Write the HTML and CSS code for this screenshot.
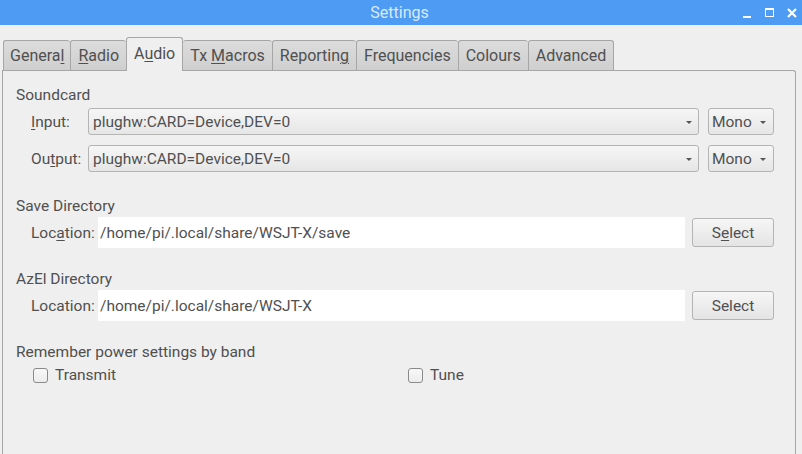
FILE: index.html
```html
<!DOCTYPE html>
<html>
<head>
<meta charset="utf-8">
<title>Settings</title>
<link rel="stylesheet" href="styles.css">
</head>
<body>
<div class="window">
  <div class="titlebar">
    <span class="title">Settings</span>
    <div class="controls">
      <span class="ctl ctl-min"></span>
      <span class="ctl ctl-max"></span>
      <span class="ctl ctl-close">
        <svg width="10" height="10" viewBox="0 0 10 10"><path d="M1 1 L9 9 M9 1 L1 9" stroke="#fff" stroke-width="2.2"/></svg>
      </span>
    </div>
  </div>

  <div class="tabs">
    <div class="tab"><span>Genera<u>l</u></span></div>
    <div class="tab"><span><u>R</u>adio</span></div>
    <div class="tab active"><span>A<u>u</u>dio</span></div>
    <div class="tab"><span>Tx <u>M</u>acros</span></div>
    <div class="tab"><span>Reportin<u>g</u></span></div>
    <div class="tab"><span>Frequencies</span></div>
    <div class="tab"><span>Colours</span></div>
    <div class="tab"><span>Advanced</span></div>
  </div>

  <div class="pane">
    <div class="group group-sound">
      <div class="group-title">Soundcard</div>
      <div class="row row-combo">
        <span class="label label-sound"><u>I</u>nput:</span>
        <div class="combo combo-wide"><span>plughw:CARD=Device,DEV=0</span><span class="arrow"></span></div>
        <div class="combo combo-mono"><span>Mono</span><span class="arrow"></span></div>
      </div>
      <div class="row row-combo row-gap">
        <span class="label label-sound">Ou<u>t</u>put:</span>
        <div class="combo combo-wide"><span>plughw:CARD=Device,DEV=0</span><span class="arrow"></span></div>
        <div class="combo combo-mono"><span>Mono</span><span class="arrow"></span></div>
      </div>
    </div>

    <div class="group group-save">
      <div class="group-title">Save Directory</div>
      <div class="row row-loc">
        <span class="label label-loc">Loc<u>a</u>tion:</span>
        <div class="field">/home/pi/.local/share/WSJT-X/save</div>
        <div class="button"><span>S<u>e</u>lect</span></div>
      </div>
    </div>

    <div class="group group-azel">
      <div class="group-title">AzEl Directory</div>
      <div class="row row-loc">
        <span class="label label-loc">Location:</span>
        <div class="field">/home/pi/.local/share/WSJT-X</div>
        <div class="button"><span>Select</span></div>
      </div>
    </div>

    <div class="group group-power">
      <div class="group-title">Remember power settings by band</div>
      <div class="checks">
        <label class="check"><span class="box"></span><span>Transmit</span></label>
        <label class="check"><span class="box"></span><span>Tune</span></label>
      </div>
    </div>
  </div>
</div>
</body>
</html>
```

FILE: styles.css
```css
* { box-sizing: border-box; }

html, body {
  margin: 0;
  padding: 0;
}

body {
  width: 802px;
  height: 454px;
  overflow: hidden;
  background: #efefef;
  font-family: Roboto, "Noto Sans", "Liberation Sans", sans-serif;
  font-size: 15.5px;
  color: #505050;
}

u {
  text-decoration: underline;
  text-underline-offset: 2px;
  text-decoration-thickness: 1px;
}

.window {
  display: flex;
  flex-direction: column;
  height: 454px;
}

/* Title bar */
.titlebar {
  position: relative;
  height: 25px;
  background: #4d9bf2;
  display: flex;
  align-items: center;
  justify-content: center;
  flex-shrink: 0;
}

.title {
  color: #d9eafd;
  font-size: 16px;
  margin-left: -3px;
}

.controls {
  position: absolute;
  right: 5px;
  top: 0;
  height: 25px;
  display: flex;
  align-items: center;
  gap: 13px;
}

.ctl {
  display: block;
  width: 10px;
  height: 10px;
  position: relative;
}

.ctl-min::after {
  content: "";
  position: absolute;
  left: 1px;
  bottom: 0;
  width: 8px;
  height: 2px;
  background: #fff;
}

.ctl-max {
  border: 1.5px solid #fff;
  border-top-width: 2px;
  width: 9px;
  height: 9px;
}

.ctl-close svg { display: block; }

/* Tabs */
.tabs {
  display: flex;
  align-items: flex-end;
  padding-left: 3px;
  margin-top: 12px;
  height: 33px;
  flex-shrink: 0;
  position: relative;
  z-index: 1;
}

.tab {
  height: 30px;
  padding: 0 7px;
  border: 1px solid #a6a6a6;
  border-bottom: none;
  border-right: none;
  border-radius: 3px 3px 0 0;
  background: linear-gradient(#dcdcdc, #cfcfcf);
  display: flex;
  align-items: center;
  color: #505050;
  font-size: 16px;
  white-space: pre;
}

.tab:first-child { padding: 0 6px; }

.tab:last-child { border-right: 1px solid #a6a6a6; }

.tab.active {
  height: 34px;
  margin-bottom: -1px;
  background: #efefef;
  border-right: 1px solid #a6a6a6;
  padding-bottom: 3px;
}

.tab.active + .tab { border-left: none; }

/* Pane */
.pane {
  flex: 1;
  margin: 0 6px 0 2px;
  border: 1px solid #a6a6a6;
  border-bottom: none;
  border-radius: 0 3px 0 0;
  padding: 15px 20px 0 13px;
  display: flex;
  flex-direction: column;
}

.group-title {
  height: 19px;
  line-height: 19px;
}

.row {
  display: flex;
  align-items: center;
  padding-left: 15px;
}

.label {
  flex-shrink: 0;
}

.label-sound { width: 57px; }
.label-loc { width: 67px; }

.row-combo {
  height: 27px;
  margin-top: 3px;
}

.row-gap { margin-top: 10px; }

.combo {
  height: 27px;
  border: 1px solid #b4b4b4;
  border-radius: 3px;
  background: linear-gradient(#f6f6f6, #e6e6e6);
  display: flex;
  align-items: center;
  justify-content: space-between;
  padding: 0 6px 0 4px;
}

.combo-wide { width: 611px; }

.combo-mono {
  width: 66px;
  margin-left: 9px;
  padding-left: 3px;
  padding-right: 7px;
}

.arrow {
  width: 0;
  height: 0;
  border-left: 3px solid transparent;
  border-right: 3px solid transparent;
  border-top: 3px solid #555;
  margin-top: 2px;
}

.group-save { margin-top: 25px; }
.group-azel { margin-top: 22px; }
.group-power { margin-top: 22px; }

.row-loc {
  height: 31px;
  margin-top: 1px;
}

.field {
  width: 587px;
  height: 31px;
  background: #ffffff;
  display: flex;
  align-items: center;
  padding-left: 2px;
}

.button {
  width: 82px;
  height: 29px;
  margin-left: 7px;
  border: 1px solid #b4b4b4;
  border-radius: 3px;
  background: linear-gradient(#f6f6f6, #e4e4e4);
  display: flex;
  align-items: center;
  justify-content: center;
}

.checks {
  display: grid;
  grid-template-columns: 375px 1fr;
  padding-left: 17px;
  margin-top: 4px;
  height: 18px;
  align-items: center;
}

.check {
  display: flex;
  align-items: center;
}

.box {
  width: 15px;
  height: 15px;
  border: 1px solid #8a8a8a;
  border-radius: 3px;
  background: linear-gradient(#f8f8f8, #ececec);
  margin-right: 7px;
}
```
